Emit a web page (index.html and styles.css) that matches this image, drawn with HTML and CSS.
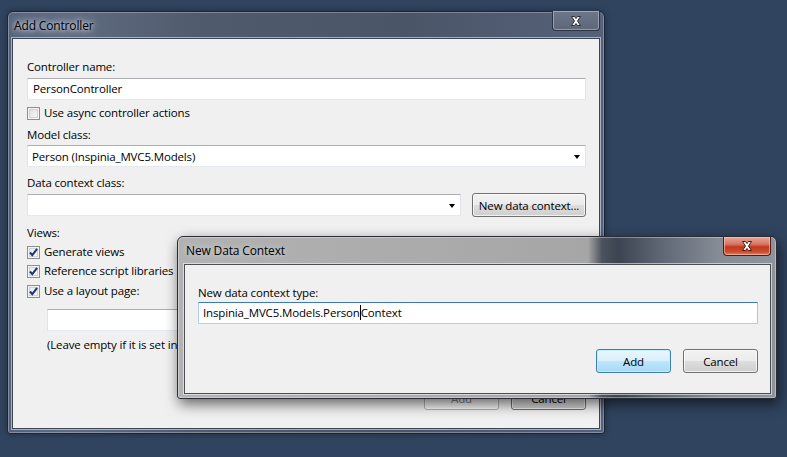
FILE: index.html
```html
<!DOCTYPE html>
<html>
<head>
<meta charset="utf-8">
<link rel="stylesheet" href="styles.css">
</head>
<body>
<div class="win main">
  <div class="titlebar"><span class="title">Add Controller</span></div>
  <div class="close close-inactive">
    <svg width="12" height="10" viewBox="0 0 12 10"><path d="M1.5 0.5h3l1.5 2 1.5-2h3l-3 4.5 3 4.5h-3l-1.5-2-1.5 2h-3l3-4.5z" fill="#fff" stroke="#2a2f38" stroke-width="1"/></svg>
  </div>
  <div class="client">
    <div class="lbl">Controller name:</div>
    <div class="textbox t1">PersonController</div>
    <div class="check-row m5"><span class="cb"></span><span>Use async controller actions</span></div>
    <div class="lbl m6">Model class:</div>
    <div class="combo c1"><span>Person (Inspinia_MVC5.Models)</span><span class="arrow"></span></div>
    <div class="lbl m8">Data context class:</div>
    <div class="ctx-row">
      <div class="combo c2"><span></span><span class="arrow"></span></div>
      <div class="btn btn-ctx">New data context...</div>
    </div>
    <div class="lbl m8">Views:</div>
    <div class="check-row m3"><span class="cb on"><svg width="11" height="11" viewBox="0 0 11 11"><path d="M2 5.5l2.3 2.6 4.8-6.3" fill="none" stroke="#1c3577" stroke-width="2"/></svg></span><span>Generate views</span></div>
    <div class="check-row m3"><span class="cb on"><svg width="11" height="11" viewBox="0 0 11 11"><path d="M2 5.5l2.3 2.6 4.8-6.3" fill="none" stroke="#1c3577" stroke-width="2"/></svg></span><span>Reference script libraries</span></div>
    <div class="check-row m4"><span class="cb on"><svg width="11" height="11" viewBox="0 0 11 11"><path d="M2 5.5l2.3 2.6 4.8-6.3" fill="none" stroke="#1c3577" stroke-width="2"/></svg></span><span>Use a layout page:</span></div>
    <div class="layout-row">
      <div class="textbox t2"></div>
      <div class="btn btn-dots">...</div>
    </div>
    <div class="note">(Leave empty if it is set in a Razor _viewstart file)</div>
    <div class="footer">
      <div class="btn btn-foot disabled">Add</div>
      <div class="btn btn-foot">Cancel</div>
    </div>
  </div>
</div>

<div class="win dialog">
  <div class="titlebar dtitle"><span class="title">New Data Context</span></div>
  <div class="close close-red">
    <svg width="12" height="10" viewBox="0 0 12 10"><path d="M1.5 0.5h3l1.5 2 1.5-2h3l-3 4.5 3 4.5h-3l-1.5-2-1.5 2h-3l3-4.5z" fill="#fff" stroke="#4a1a12" stroke-width="1"/></svg>
  </div>
  <div class="client dclient">
    <div class="lbl">New data context type:</div>
    <div class="textbox focus">Inspinia_MVC5.Models.Person<span class="caret"></span>Context</div>
    <div class="dfooter">
      <div class="btn btn-foot default">Add</div>
      <div class="btn btn-foot">Cancel</div>
    </div>
  </div>
</div>
</body>
</html>
```
FILE: styles.css
```css
* { box-sizing: border-box; }
html, body { margin: 0; padding: 0; }
body {
  width: 787px;
  height: 457px;
  overflow: hidden;
  position: relative;
  background: #30445f;
  font-family: "Open Sans", "Noto Sans", sans-serif;
  font-size: 11.5px;
  letter-spacing: -0.15px;
  color: #000;
}

.win {
  position: absolute;
  display: flex;
  flex-direction: column;
  border-radius: 6px 6px 3px 3px;
}

.main {
  left: 7px;
  top: 11px;
  width: 598px;
  height: 423px;
  padding: 0 4px 4px 4px;
  border: 1px solid #1b2535;
  background: linear-gradient(to right, #56627a 0, #5f6b80 60px, #4f5a6c 200px, #4a5568 400px, #56627a 598px);
  box-shadow: inset 0 0 0 1px rgba(255,255,255,0.28), 0 0 6px rgba(0,0,0,0.35);
}

.titlebar {
  height: 26px;
  display: flex;
  align-items: center;
  padding-left: 2px;
  flex: none;
  font-size: 12px;
}
.title {
  color: #000;
  text-shadow: 0 0 4px rgba(235,240,248,0.95), 0 0 8px rgba(225,232,244,0.8), 0 0 14px rgba(225,232,244,0.6);
}

.close {
  position: absolute;
  width: 48px;
  height: 20px;
  display: flex;
  align-items: center;
  justify-content: center;
  border-radius: 0 0 4px 4px;
}
.close-inactive {
  top: -1px;
  right: 4px;
  border: 1px solid #2a3341;
  border-top: none;
  background: linear-gradient(#6d778a, #5d6779);
  box-shadow: inset 0 0 0 1px rgba(255,255,255,0.35);
}
.close-red {
  top: 0;
  right: 5px;
  height: 19px;
  border: 1px solid #4f1d16;
  border-top: none;
  background: linear-gradient(#e7a898 0, #d77461 40%, #c2391f 55%, #cc4a2c 80%, #de7a55 100%);
  box-shadow: inset 0 0 0 1px rgba(255,210,200,0.55);
}

.client {
  flex: 1;
  display: flex;
  flex-direction: column;
  background: #f0f0f0;
  border: 1px solid #3a4556;
  box-shadow: 0 0 0 1px rgba(225,232,242,0.6);
  padding: 20px 13px 18px 14px;
}

.lbl, .check-row, .note {
  line-height: 16px;
  height: 16px;
  white-space: nowrap;
}
.m3 { margin-top: 3px; }
.m4 { margin-top: 4px; }
.m5 { margin-top: 5px; }
.m6 { margin-top: 6px; }
.m8 { margin-top: 8px; }

.textbox {
  height: 22px;
  background: #fff;
  border: 1px solid;
  border-color: #abadb3 #e2e3ea #e3e9ef #e2e3ea;
  padding: 0 5px;
  line-height: 20px;
  white-space: nowrap;
}
.t1 { margin-top: 3px; }

.check-row {
  display: flex;
  align-items: center;
  gap: 4px;
}
.cb {
  width: 13px;
  height: 13px;
  border: 1px solid #8e8f8f;
  background: linear-gradient(135deg, #dcdcdc, #fbfbfb);
  box-shadow: inset 0 0 0 1px #f4f4f4, inset 0 0 0 2px #d2d2d2;
  display: flex;
  align-items: center;
  justify-content: center;
  flex: none;
}
.cb.on {
  background: linear-gradient(135deg, #e6e6e6, #fdfdfd);
}

.combo {
  height: 22px;
  background: #fff;
  border: 1px solid;
  border-color: #abadb3 #e2e3ea #e3e9ef #e2e3ea;
  display: flex;
  align-items: center;
  justify-content: space-between;
  padding: 0 5px 0 4px;
}
.c1 { margin-top: 2px; }
.arrow {
  width: 0;
  height: 0;
  border-left: 3.5px solid transparent;
  border-right: 3.5px solid transparent;
  border-top: 4px solid #000;
  margin-top: 1px;
}

.ctx-row {
  margin-top: 2px;
  height: 24px;
  display: flex;
  align-items: center;
  gap: 11px;
}
.c2 { width: 434px; }

.btn {
  height: 24px;
  border: 1px solid #707070;
  border-radius: 3px;
  background: linear-gradient(#f2f2f2 0, #ebebeb 50%, #dddddd 50%, #cfcfcf 100%);
  box-shadow: inset 0 0 0 1px rgba(255,255,255,0.7);
  display: flex;
  align-items: center;
  justify-content: center;
  white-space: nowrap;
}
.btn-ctx { width: 114px; }

.layout-row {
  margin-top: 9px;
  margin-left: 20px;
  display: flex;
  align-items: center;
  gap: 8px;
}
.t2 { flex: 1; }
.btn-dots { width: 28px; height: 23px; }

.note { margin-top: 6px; margin-left: 20px; }

.footer {
  margin-top: auto;
  display: flex;
  justify-content: flex-end;
  gap: 12px;
}
.btn-foot { width: 75px; height: 24px; }
.btn.disabled {
  color: #838383;
  border-color: #adb2b5;
  background: #f4f4f4;
}
.btn.default {
  border-color: #3c7fb1;
  background: linear-gradient(#eaf6fd 0, #d9f0fc 50%, #bee6fd 50%, #a7d9f5 100%);
  box-shadow: inset 0 0 0 1px rgba(190,240,255,0.9);
}

/* dialog */
.dialog {
  left: 177px;
  top: 236px;
  width: 600px;
  height: 163px;
  padding: 0 5px 4px 6px;
  border: 1px solid #2a2d33;
  background: linear-gradient(to right, #b2b2b2 0, #a6a6a6 410px, #4c535e 424px, #3c4451 440px, #5d6573 480px, #858c96 540px, #8e949c 600px);
  box-shadow: inset 0 0 0 1px rgba(255,255,255,0.35), 2px 5px 14px rgba(0,0,0,0.6);
}
.dtitle {
  height: 27px;
  padding-left: 2px;
}
.dtitle .title {
  text-shadow: 0 0 6px rgba(240,240,240,0.6), 0 0 10px rgba(240,240,240,0.4);
}
.dclient {
  border-color: #4a4d52;
  box-shadow: 0 0 0 1px rgba(255,255,255,0.55);
  padding: 20px 12px 0 13px;
}
.textbox.focus {
  margin-top: 1px;
  border-color: #3d7bad #a4c9e3 #b5cfe7 #b5cfe7;
  padding-left: 4px;
}
.caret {
  display: inline-block;
  width: 1px;
  height: 15px;
  background: #000;
  vertical-align: middle;
  margin-top: -2px;
}
.dfooter {
  margin-top: 25px;
  display: flex;
  justify-content: flex-end;
  gap: 12px;
}
```
